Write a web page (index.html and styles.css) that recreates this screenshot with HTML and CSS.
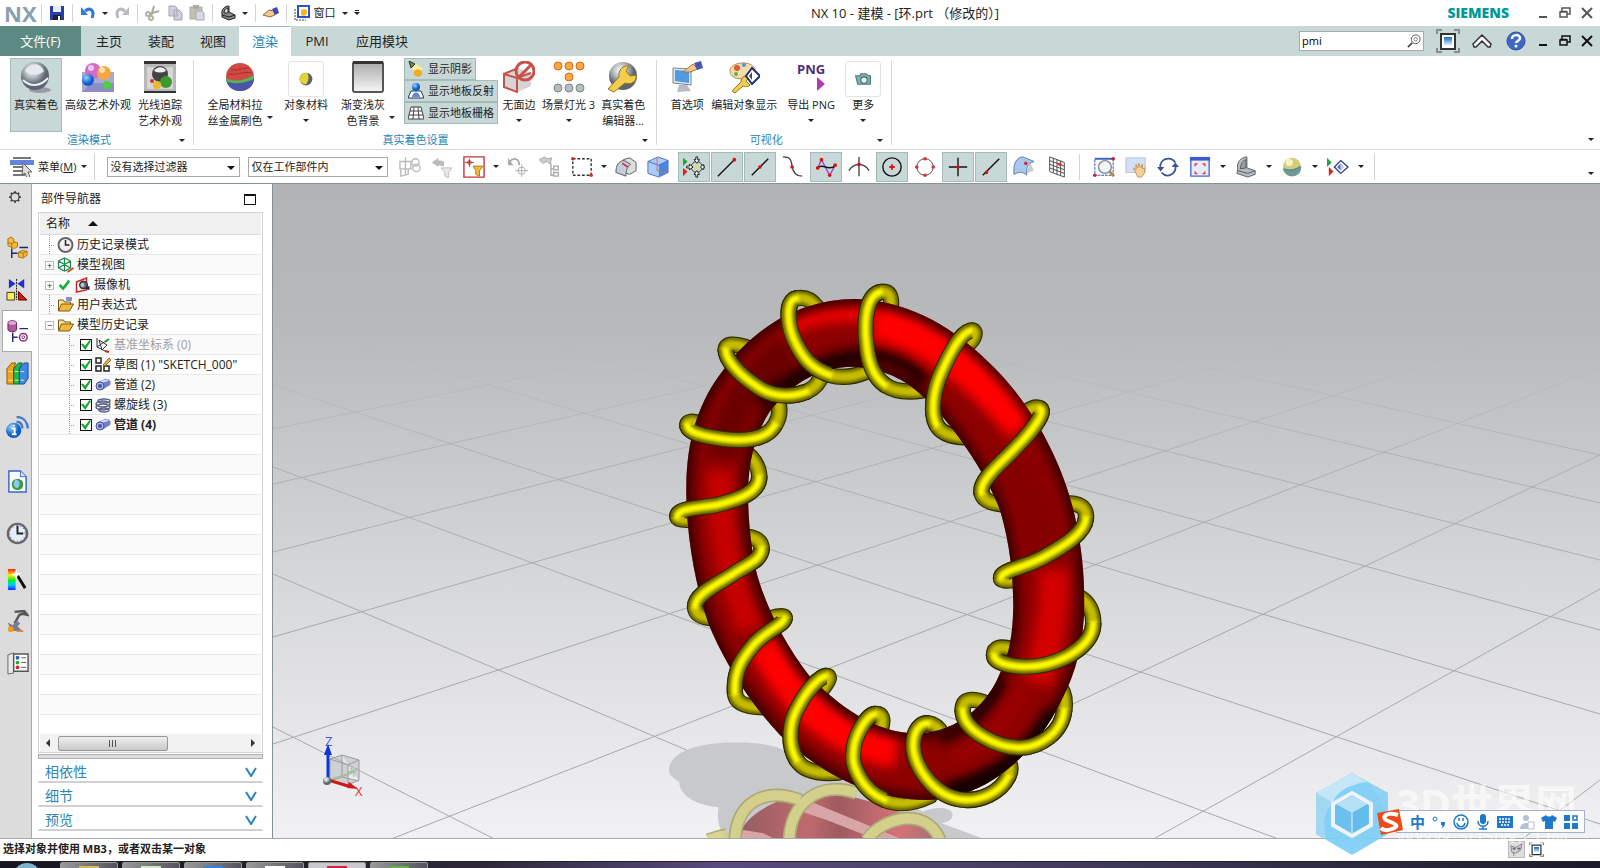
FILE: index.html
```
<!DOCTYPE html>
<html lang="zh-CN">
<head>
    <meta charset="UTF-8">
    <meta name="viewport" content="width=device-width, initial-scale=1.0">
    <title>NX 10 - 建模</title>
    <link rel="stylesheet" href="styles.css">
</head>
<body>
    <!-- shared icons -->
    <svg class="defs" aria-hidden="true">
        <defs>
            <radialGradient id="silver" cx="40%" cy="30%"><stop offset="0" stop-color="#fff"/><stop offset=".5" stop-color="#b9bec4"/><stop offset="1" stop-color="#5c646c"/></radialGradient>
            <radialGradient id="blueBall" cx="35%" cy="30%"><stop offset="0" stop-color="#9cd4ff"/><stop offset="1" stop-color="#0b5fc8"/></radialGradient>
            <linearGradient id="rainbow" x2="0" y2="1"><stop offset="0" stop-color="#f22"/><stop offset=".3" stop-color="#fe0"/><stop offset=".55" stop-color="#0e3"/><stop offset=".75" stop-color="#0cf"/><stop offset="1" stop-color="#22f"/></linearGradient>
            <linearGradient id="grayFade" x2="0" y2="1"><stop offset="0" stop-color="#aaa"/><stop offset="1" stop-color="#f6f6f6"/></linearGradient>
            <linearGradient id="screen" x2="0" y2="1"><stop offset="0" stop-color="#1668c0"/><stop offset="1" stop-color="#d8ecff"/></linearGradient>
        </defs>
        <symbol id="i-folder" viewBox="0 0 16 16"><path d="M1 14V3h5l1 2h6v3" fill="#f7e0a0" stroke="#7a5a10"/><path d="M1 14l3-7h12l-4 7z" fill="#f0b93c" stroke="#7a5a10"/></symbol>
        <symbol id="i-pipe" viewBox="0 0 16 16"><path d="M3 5l7-3c4-1 7 3 5 6l-8 5z" fill="#6f80cf"/><path d="M6 5l7-2" stroke="#d5dcfa" stroke-width="2"/><ellipse cx="5" cy="9" rx="4" ry="4" fill="#a9b6ea" stroke="#44508f"/><circle cx="5" cy="9" r="2" fill="#4a5490"/></symbol>
        <symbol id="i-restore" viewBox="0 0 12 12"><path d="M3 4V1h8v6H8M1 5h7v5H1zM1 4.500h7" fill="none" stroke="currentColor" stroke-width="1.500"/></symbol>
        <symbol id="i-close" viewBox="0 0 12 12"><path d="M1 1l10 10M11 1L1 11" stroke="currentColor" stroke-width="2"/></symbol>
        <symbol id="i-min" viewBox="0 0 12 12"><path d="M2 10h8" stroke="currentColor" stroke-width="2"/></symbol>
        <symbol id="i-fit" viewBox="0 0 24 24"><path d="M1 5V1h5M18 1h5v4M1 19v4h5M18 23h5v-4" fill="none" stroke="#8c8c8c" stroke-width="2"/><path d="M5 5h14v15H5z" fill="#fff" stroke="#333" stroke-width="2"/><path d="M8 8h8v8H8z" fill="url(#screen)"/></symbol>
        <symbol id="i-clamp" viewBox="0 0 24 24"><path d="M3 15C1 7 7 1 13 1v12l9 3v4l-8 3-12-4z" fill="#b8bcc0" stroke="#55595d"/><path d="M6 14c0-5 2-9 6-10v9z" fill="#989ca0" stroke="#55595d"/><path d="M3 16l11 3 8-3" fill="none" stroke="#55595d"/></symbol>
        <symbol id="i-play2" viewBox="0 0 24 24"><path d="M0 2l5 5-5 5z" fill="#1fa83a"/><path d="M2 12l5 5-5 5z" fill="#d22"/><path d="M15 5l8 7-8 7-7-7z" fill="#fff" stroke="#333f90" stroke-width="1.500"/><path d="M15 8v8l-4-4z" fill="#5a74d0"/><path d="M15 8v8l4-4z" fill="#ccd"/></symbol>
    </svg>

    <header class="titlebar">
        <span class="logo">NX</span>
        <i class="sep"></i>
        <button class="quick" aria-label="保存"><svg viewBox="0 0 16 16"><path d="M1 1h14v14H1z" fill="#2a3cab"/><path d="M4 1h8v6H4z" fill="#e6ecff"/><path d="M4 10h8v5H4z" fill="#222"/><path d="M9 11h2v4H9z" fill="#fff"/></svg></button>
        <i class="sep"></i>
        <button class="quick" aria-label="撤消"><svg viewBox="0 0 16 16"><path d="M5 6c5-4 10-1 7 7" fill="none" stroke="#2f78dc" stroke-width="3"/><path d="M1 2v8h7z" fill="#2f78dc"/></svg></button>
        <i class="caret"></i>
        <button class="quick" aria-label="重做"><svg viewBox="0 0 16 16"><path d="M11 6C6 2 1 5 4 13" fill="none" stroke="#b7bcc2" stroke-width="3"/><path d="M15 2v8H8z" fill="#b7bcc2"/></svg></button>
        <i class="sep"></i>
        <button class="quick" aria-label="剪切"><svg viewBox="0 0 16 16"><path d="M9 1L6 11M14 6L4 9" stroke="#a9a9a0" stroke-width="2"/><circle cx="3" cy="9" r="2" fill="none" stroke="#b5b3a0" stroke-width="2"/><circle cx="6" cy="13" r="2" fill="none" stroke="#b5b3a0" stroke-width="2"/></svg></button>
        <button class="quick" aria-label="复制"><svg viewBox="0 0 16 16"><path d="M2 1h6l2 2v8H2zM7 5h5l3 3v7H7z" fill="#cfcfda" stroke="#a4a4b4"/></svg></button>
        <button class="quick" aria-label="粘贴"><svg viewBox="0 0 16 16"><path d="M1 2h12v12H1z" fill="#c3c0b0" stroke="#aaa"/><path d="M4 0h6v4H4z" fill="#aaa"/><path d="M7 6h6l2 2v7H7z" fill="#d8d8e0" stroke="#a4a4b4"/></svg></button>
        <i class="sep"></i>
        <button class="quick" aria-label="重复命令"><svg viewBox="0 0 16 16"><path d="M2 9C1 4 5 1 9 1v6l6 3v3l-6 2-7-3z" fill="#888" stroke="#222"/><path d="M4 8c0-3 2-5 4-5v5z" fill="#ddd" stroke="#222"/><path d="M2 10l7 2 6-2" fill="none" stroke="#222"/></svg></button>
        <i class="caret"></i>
        <i class="sep"></i>
        <button class="quick" aria-label="触控模式"><svg viewBox="0 0 16 16"><path d="M0 10l6-5 5 1 1 4-5 2z" fill="#f4c894" stroke="#9a6a34"/><path d="M9 4l5-2 2 6-4 2z" fill="#3b49b6"/></svg></button>
        <i class="sep"></i>
        <button class="quick window-menu"><svg viewBox="0 0 16 16"><path d="M1 4v11h11" fill="none" stroke="#444" stroke-dasharray="2 1"/><path d="M4 1h11v11H4z" fill="#fff" stroke="#2c50d0" stroke-width="2"/><path d="M7 5l3-1 3 1v4l-3 2-3-1z" fill="#f5b61e"/></svg>窗口</button>
        <i class="caret"></i>
        <i class="caret overflow"></i>
        <h1 class="title">NX 10 - 建模 - [环.prt （修改的）]</h1>
        <span class="brand">SIEMENS</span>
        <div class="window-buttons">
            <button aria-label="最小化"><svg><use href="#i-min"/></svg></button>
            <button aria-label="还原"><svg><use href="#i-restore"/></svg></button>
            <button aria-label="关闭"><svg><use href="#i-close"/></svg></button>
        </div>
    </header>

    <nav class="tabs">
        <button class="file-tab">文件(F)</button>
        <button class="tab">主页</button>
        <button class="tab">装配</button>
        <button class="tab">视图</button>
        <button class="tab active">渲染</button>
        <button class="tab">PMI</button>
        <button class="tab">应用模块</button>
        <div class="search">
            <input type="text" value="pmi" aria-label="查找命令">
            <svg viewBox="0 0 16 16"><circle cx="10" cy="6" r="5" fill="#fff" stroke="#444"/><circle cx="10" cy="6" r="2" fill="none" stroke="#777"/><path d="M6 10l-5 5" stroke="#444" stroke-width="2"/></svg>
        </div>
        <button class="tool" aria-label="全屏"><svg><use href="#i-fit"/></svg></button>
        <button class="tool" aria-label="最小化功能区"><svg viewBox="0 0 24 24"><path d="M3 15l9-9 9 9-1 3h-2l-6-6-6 6H4z" fill="#fff" stroke="#333" stroke-width="1.500"/></svg></button>
        <button class="tool" aria-label="帮助"><svg viewBox="0 0 24 24"><circle cx="12" cy="12" r="9" fill="#3f68c4" stroke="#2f4f9e"/><path d="M8 10c0-5 8-5 8-1 0 3-4 3-4 5" fill="none" stroke="#fff" stroke-width="2.500"/><circle cx="12" cy="17" r="1.500" fill="#fff"/></svg></button>
        <div class="window-buttons dark">
            <button aria-label="最小化部件"><svg><use href="#i-min"/></svg></button>
            <button aria-label="还原部件"><svg><use href="#i-restore"/></svg></button>
            <button aria-label="关闭部件"><svg><use href="#i-close"/></svg></button>
        </div>
    </nav>

    <section class="ribbon">
        <div class="group">
            <div class="group-items">
                <button class="big active"><svg viewBox="0 0 32 32"><ellipse cx="20" cy="29" rx="11" ry="3" fill="#99a"/><circle cx="15" cy="15" r="14" fill="url(#silver)"/><path d="M5 10c5-9 15-9 19 0-5 5-14 5-19 0z" fill="#e6e9ed"/><path d="M3 19c7 7 17 7 25-2" fill="none" stroke="#eef" stroke-width="2"/></svg><span>真实着色</span></button>
                <button class="big wide"><svg viewBox="0 0 32 32"><path d="M0 11h32v20H0z" fill="#a9a9d8"/><path d="M0 31l9-9h23v9z" fill="#8d8dc6"/><circle cx="11" cy="10" r="8" fill="#cf6cc8"/><circle cx="9" cy="7" r="3" fill="#f4c4f0"/><circle cx="22" cy="12" r="7" fill="#f5a742"/><circle cx="20" cy="9" r="3" fill="#ffe0a8"/><circle cx="6" cy="19" r="6" fill="url(#blueBall)"/><circle cx="25" cy="24" r="4" fill="#4cd23a"/></svg><span>高级艺术外观</span></button>
                <button class="big"><svg viewBox="0 0 32 32"><path d="M0 1h32v30H0z" fill="#b8b8b8"/><path d="M0 0h32v3H0zM0 30h32v2H0z" fill="#333"/><path d="M3 6h26v22H3z" fill="#d6d6d6"/><circle cx="16" cy="13" r="8" fill="#444"/><path d="M10 10c3-5 10-5 12 0-4 2-8 2-12 0z" fill="#eee"/><circle cx="22" cy="21" r="6" fill="#3b9a2e"/><circle cx="13" cy="24" r="4" fill="#e8b830"/><circle cx="8" cy="20" r="2" fill="#c33"/></svg><span>光线追踪<br>艺术外观</span></button>
            </div>
            <div class="group-name">渲染模式<i class="caret"></i></div>
        </div>
        <div class="group">
            <div class="group-items">
                <button class="big wider"><svg viewBox="0 0 32 32"><circle cx="16" cy="16" r="14" fill="#cf4a44"/><path d="M2 18c9 5 19 2 28-3 1 8-4 15-14 15-7 0-13-4-14-12z" fill="#4a55a8"/><path d="M2 17c9 5 19 2 28-3v4c-9 4-19 6-28 2z" fill="#57b556"/><path d="M7 8c6 3 12-2 18-1M4 13c8 2 14-3 24-1" fill="none" stroke="#a8302c"/></svg><span class="with-caret"><span>全局材料拉<br>丝金属刷色</span><i class="caret"></i></span></button>
                <button class="big"><svg class="framed" viewBox="0 0 32 32"><circle cx="16" cy="16" r="6" fill="#5d6066"/><path d="M17 10c2 3 2 7-1 11-8 0-8-11 1-11z" fill="#e0d63c"/></svg><span>对象材料</span><i class="caret"></i></button>
                <button class="big wide"><svg viewBox="0 0 32 32"><rect x="1" y="1" width="30" height="30" rx="2" fill="url(#grayFade)" stroke="#555" stroke-width="2"/><path d="M1 0h30v3H1z" fill="#333"/></svg><span class="with-caret"><span>渐变浅灰<br>色背景</span><i class="caret"></i></span></button>
                <div class="stack">
                    <button class="small"><svg viewBox="0 0 16 16"><path d="M1 0l6 3-4 4z" fill="#7a8a30" stroke="#333"/><path d="M4 7l4-4 7 5-6 7z" fill="#f7f0a0"/><path d="M6 10l4-2 4 2v4l-4 2-4-2z" fill="#efac1c"/></svg>显示阴影</button>
                    <button class="small"><svg viewBox="0 0 16 16"><path d="M3 8h10l3 7H0z" fill="#fff" stroke="#335"/><circle cx="8" cy="4" r="4" fill="url(#blueBall)"/><path d="M4 14c0-6 8-6 8 0z" fill="#5a8ad8"/></svg>显示地板反射</button>
                    <button class="small"><svg viewBox="0 0 16 16"><path d="M3 2h10l3 12H0z" fill="#fff"/><path d="M3 2h10l3 12H0zM2 6h12M1 10h14M6 2L5 14M10 2l1 12" fill="none" stroke="#444"/></svg>显示地板栅格</button>
                </div>
                <button class="big narrow"><svg viewBox="0 0 32 32"><path d="M1 13l14-6 13 5v13l-13 6-14-5z" fill="#d5d5d5"/><path d="M1 13l13 4v14L1 26zM1 13l14-6M14 17l14-5" fill="none" stroke="#c8514a" stroke-width="2"/><circle cx="22" cy="10" r="9" fill="none" stroke="#c8514a" stroke-width="3"/><path d="M16 16L28 4" stroke="#c8514a" stroke-width="3"/></svg><span>无面边</span><i class="caret"></i></button>
                <button class="big"><svg viewBox="0 0 32 32"><g fill="#f8a83c" stroke="#d06a20"><circle cx="5" cy="5" r="4"/><circle cx="16" cy="5" r="4"/><circle cx="27" cy="5" r="4"/><circle cx="16" cy="16" r="4"/></g><g fill="#b5bcc0" stroke="#7c8488"><circle cx="5" cy="27" r="4"/><circle cx="16" cy="27" r="4"/><circle cx="27" cy="27" r="4"/></g></svg><span>场景灯光 3</span><i class="caret"></i></button>
                <button class="big"><svg viewBox="0 0 32 32"><circle cx="16" cy="15" r="14" fill="url(#silver)"/><path d="M1 28l11-12c-1-7 4-12 10-11l-3 5 4 5 6-1c1 7-5 10-11 8L7 31z" fill="#f2ce4e" stroke="#9a7418"/></svg><span>真实着色<br>编辑器...</span></button>
            </div>
            <div class="group-name">真实着色设置<i class="caret"></i></div>
        </div>
        <div class="group visual">
            <div class="group-items">
                <button class="big narrow"><svg viewBox="0 0 32 32"><path d="M2 7l18 1v16L2 22z" fill="#dfe4ea" stroke="#7b858f"/><path d="M4 9l14 1v12L4 20z" fill="#4d9be0"/><path d="M8 24h8l4 6-14 1z" fill="#b5bcc4"/><path d="M12 11l10-8 5 5-8 3z" fill="#f3c68c" stroke="#a8763c"/><path d="M23 2l7-2 2 7-6 2z" fill="#4856b8"/></svg><span>首选项</span></button>
                <button class="big wide"><svg viewBox="0 0 32 32"><path d="M2 10C2 0 26-1 27 9c1 6-8 1-10 6s-15 3-15-5z" fill="#f4dcae" stroke="#b08c50"/><circle cx="9" cy="7" r="3" fill="#e05a34"/><circle cx="16" cy="4" r="2" fill="#3f9ad8"/><circle cx="8" cy="13" r="2" fill="#56b848"/><path d="M4 30l9-9c0-6 5-7 8-4l-3 3 4 4c-3 3-7 1-7 1l-8 7z" fill="#f2ce4e" stroke="#9a7418"/><path d="M24 7l8 8-8 8-6-8z" fill="#fff" stroke="#223078" stroke-width="2"/><path d="M24 11v8l-3-4z" fill="#445"/></svg><span>编辑对象显示</span></button>
                <button class="big roomy"><span class="png-icon">PNG<svg viewBox="0 0 8 14"><path d="M0 0l8 7-8 7z" fill="#b03ab0"/></svg></span><span>导出 PNG</span><i class="caret"></i></button>
                <button class="big narrow"><svg class="framed" viewBox="0 0 32 32"><path d="M9 13h4l1-2h5l2 2h2v8H11z" fill="#7fb0ac" stroke="#4a7a78"/><circle cx="17" cy="17" r="3" fill="#dff0f0" stroke="#4a6a6a"/></svg><span>更多</span><i class="caret"></i></button>
            </div>
            <div class="group-name">可视化<i class="caret"></i></div>
        </div>
        <i class="caret ribbon-end"></i>
    </section>

    <section class="toolbar">
        <button class="menu-button"><svg viewBox="0 0 24 20"><path d="M3 1h18M3 10h12M3 14h10M3 18h12" stroke="#777" stroke-width="2"/><path d="M0 3h24v5H0z" fill="#6284dc"/><path d="M13 6l9 9h-4l2 5-3 1-2-5-3 2z" fill="#ddd" stroke="#666"/></svg>菜单(<u>M</u>)<i class="caret"></i></button>
        <i class="sep"></i>
        <div class="picker"><select aria-label="选择过滤器"><option>没有选择过滤器</option></select></div>
        <div class="picker second"><select aria-label="选择范围"><option>仅在工作部件内</option></select></div>
        <div class="icons">
            <button aria-label="装配约束"><svg viewBox="0 0 24 24"><g fill="none" stroke="#bbb" stroke-width="1.500"><path d="M1 6h12v8H1zM7 1v20M2 14v8l8-2v-6"/><circle cx="18" cy="7" r="4"/><circle cx="19" cy="13" r="4"/></g></svg></button>
            <button aria-label="重置过滤器"><svg viewBox="0 0 24 24"><path d="M1 7l7-5v3c7 0 7 1 6 6-2 1-3-1-6-1v2z" fill="#bbb"/><path d="M11 13h12l-4 5v6l-4-2v-4z" fill="#e8e8e8" stroke="#bbb"/></svg></button>
            <button aria-label="选择过滤"><svg viewBox="0 0 24 24"><path d="M1 1h22v22H1z" fill="#fff" stroke="#c8303a" stroke-width="1.500"/><path d="M7 3v9M2 7h10" stroke="#a33"/><circle cx="7" cy="7" r="2" fill="none" stroke="#a33"/><path d="M11 11h11l-4 5v6l-4-2v-4z" fill="#f4b63c" stroke="#a87818"/></svg></button>
            <i class="caret"></i>
            <button aria-label="恢复"><svg viewBox="0 0 24 24"><path d="M3 6c6-6 11-1 10 4" fill="none" stroke="#aaa" stroke-width="2"/><path d="M1 2v8h6z" fill="#aaa"/><path d="M16 9v14M9 16h14" stroke="#aaa"/><circle cx="16" cy="16" r="4" fill="none" stroke="#aaa"/></svg></button>
            <button aria-label="查找组件"><svg viewBox="0 0 24 24"><path d="M0 4l6-3 3 2 5-1-2 7-3-3-5 2z" fill="#ccc" stroke="#aaa"/><path d="M13 8v13h3M13 14h3M16 11h5v4h-5zM16 18h5v4h-5z" fill="none" stroke="#aaa" stroke-width="1.500"/></svg></button>
            <button aria-label="矩形选择"><svg viewBox="0 0 24 24"><path d="M2 3h20v18H2z" fill="none" stroke="#333" stroke-width="1.500" stroke-dasharray="3 2"/><circle cx="2" cy="3" r="2" fill="#c33"/><circle cx="22" cy="21" r="2" fill="#c33"/></svg></button>
            <i class="caret"></i>
            <button aria-label="面规则"><svg viewBox="0 0 24 24"><path d="M9 4l7-2 7 5v9l-7 4-7-2z" fill="#ddd" stroke="#555"/><path d="M1 18c0-8 3-13 9-13l7 4c-4 3-5 7-5 13z" fill="#c2ccdc" stroke="#555"/><path d="M8 8l6 4" stroke="#d33" stroke-width="2"/></svg></button>
            <button aria-label="实体"><svg viewBox="0 0 24 24"><path d="M1 6l11-5 11 4v13l-10 5-12-4z" fill="#a9cdf6" stroke="#56b"/><path d="M13 10v13l10-5V5z" fill="#4a86e0"/><path d="M1 6l12 4 10-5" fill="none" stroke="#56b"/><path d="M11 2v14l11 3" fill="none" stroke="#d66"/></svg></button>
        </div>
        <div class="icons snap">
            <button class="on" aria-label="启用捕捉点"><svg viewBox="0 0 24 24"><path d="M0 2l5 4-5 5z" fill="#1fa83a"/><path d="M0 13l5 4-5 5z" fill="#d22"/><circle cx="15" cy="12" r="6" fill="none" stroke="#333"/><circle cx="15" cy="12" r="2" fill="#f8e020"/><path d="M15 8l-3-4h2V1h2v3h2zM15 16l-3 4h2v3h2v-3h2zM11 12l-4-3v2H4v2h3v2zM19 12l3-3v2h2v2h-2v2z" fill="#fff" stroke="#111"/></svg></button>
            <button class="on" aria-label="终点"><svg viewBox="0 0 24 24"><path d="M2 22L20 4" stroke="#111" stroke-width="1.500"/><circle cx="20" cy="4" r="2" fill="#d11"/></svg></button>
            <button class="on" aria-label="中点"><svg viewBox="0 0 24 24"><path d="M3 21L21 3" stroke="#111" stroke-width="1.500"/><circle cx="12" cy="12" r="2" fill="#d11"/></svg></button>
            <button aria-label="控制点"><svg viewBox="0 0 24 24"><path d="M1 1c8 0 9 3 10 10s4 11 11 11" fill="none" stroke="#444" stroke-width="1.500"/><circle cx="11" cy="12" r="2" fill="#d11"/></svg></button>
            <button class="on" aria-label="极点"><svg viewBox="0 0 24 24"><path d="M3 13L7 4l9 17 6-11" fill="none" stroke="#94c" stroke-width="1.500"/><path d="M3 13c6-6 10 4 19-2" fill="none" stroke="#111" stroke-width="1.500"/><g fill="#d11"><circle cx="3" cy="13" r="2"/><circle cx="7" cy="4" r="2"/><circle cx="16" cy="21" r="2"/><circle cx="22" cy="10" r="2"/></g></svg></button>
            <button aria-label="交点"><svg viewBox="0 0 24 24"><path d="M12 1v21M1 16c5-9 17-9 22 0" fill="none" stroke="#444" stroke-width="1.500"/><circle cx="12" cy="9" r="2" fill="#d11"/></svg></button>
            <button class="on" aria-label="圆心"><svg viewBox="0 0 24 24"><circle cx="12" cy="12" r="10" fill="none" stroke="#111" stroke-width="1.500"/><path d="M12 9v6M9 12h6" stroke="#d11" stroke-width="2"/></svg></button>
            <button aria-label="象限点"><svg viewBox="0 0 24 24"><circle cx="12" cy="12" r="9" fill="none" stroke="#444"/><g fill="#d33"><circle cx="12" cy="3" r="2"/><circle cx="12" cy="21" r="2"/><circle cx="3" cy="12" r="2"/><circle cx="21" cy="12" r="2"/></g></svg></button>
            <button class="on" aria-label="现有点"><svg viewBox="0 0 24 24"><path d="M12 2v20M2 12h20" stroke="#111" stroke-width="1.500"/><circle cx="12" cy="12" r="2" fill="#d11"/></svg></button>
            <button class="on" aria-label="曲线上的点"><svg viewBox="0 0 24 24"><path d="M3 21L21 3" stroke="#111" stroke-width="1.500"/><circle cx="7" cy="18" r="2" fill="#d11"/></svg></button>
            <button aria-label="面上的点"><svg viewBox="0 0 24 24"><path d="M14 19l9-3-4-8z" fill="#ccc"/><path d="M1 20C0 8 4 1 11 1l12 5c-7 2-9 7-8 15-4-4-8-4-14-1z" fill="#a8c8ee" stroke="#5a7ab0"/><circle cx="14" cy="8" r="2" fill="#c33"/></svg></button>
            <button aria-label="栅格点"><svg viewBox="0 0 24 24"><path d="M4 1l16 6v16L4 17zM8 2v16M12 4v16M16 5v16M4 5l16 6M4 9l16 6M4 13l16 6" fill="none" stroke="#444"/><circle cx="15" cy="9" r="2" fill="#d33"/></svg></button>
        </div>
        <i class="sep"></i>
        <div class="icons view">
            <button aria-label="缩放"><svg viewBox="0 0 24 24"><path d="M2 3h20v18H2z" fill="none" stroke="#24c" stroke-dasharray="3 1"/><path d="M2 2h20v2H2z" fill="#3a5cd0"/><circle cx="13" cy="12" r="7" fill="#eef2f6" fill-opacity=".8" stroke="#888" stroke-width="1.500"/><path d="M18 17l5 5" stroke="#a88c50" stroke-width="3"/><circle cx="2" cy="21" r="2" fill="#c22"/><circle cx="22" cy="3" r="2" fill="#c22"/></svg></button>
            <button aria-label="平移"><svg viewBox="0 0 24 24"><path d="M1 2h21v16H1z" fill="#d5def4" stroke="#b5c0e0"/><path d="M9 13l3 2V9l2 4 1-5 2 5 2-4v5l3-1-1 6-3 4h-4z" fill="#f3d09c" stroke="#bf9458"/></svg></button>
            <button aria-label="旋转"><svg viewBox="0 0 24 24"><path d="M4 15C1 3 15-1 20 7M20 9c2 11-9 16-15 9" fill="none" stroke="#3f5298" stroke-width="2"/><path d="M0 12h8l-4 5zM16 12h8l-4-5z" fill="#3f5298"/></svg></button>
            <button aria-label="适合窗口"><svg viewBox="0 0 24 24"><path d="M2 2h20v20H2z" fill="#e8ecff" stroke="#4a6ad8" stroke-width="1.500"/><path d="M1 1h22v4H1z" fill="#3a5cd0"/><path d="M6 8h4L6 12zM18 8h-4l4 4zM6 20h4l-4-4zM18 20h-4l4-4z" fill="#e04a30"/></svg></button>
            <i class="caret"></i>
            <button aria-label="渲染样式"><svg><use href="#i-clamp"/></svg></button>
            <i class="caret"></i>
            <button aria-label="背景"><svg viewBox="0 0 24 24"><circle cx="12" cy="12" r="10" fill="#d4cc78"/><path d="M2 13c6 3 13 2 20-2 1 14-18 15-20 2z" fill="#6f9a94"/><circle cx="9" cy="7" r="4" fill="#f4f2c0"/><path d="M4 14c6 3 12 1 17-3" fill="none" stroke="#3a7ac8"/></svg></button>
            <i class="caret"></i>
            <button aria-label="显示和隐藏"><svg><use href="#i-play2"/></svg></button>
            <i class="caret"></i>
        </div>
        <i class="sep"></i>
        <i class="caret toolbar-end"></i>
    </section>

    <main class="workspace">
        <aside class="resource-bar">
            <button class="gear" aria-label="选项"><svg viewBox="0 0 24 24"><circle cx="12" cy="12" r="7" fill="none" stroke="#333" stroke-width="2"/><path d="M12 2v3M12 19v3M2 12h3M19 12h3M5 5l2 2M17 17l2 2M19 5l-2 2M5 19l2-2" stroke="#333" stroke-width="3"/></svg></button>
            <button aria-label="装配导航器"><svg viewBox="0 0 24 24"><path d="M6 13v10M6 18h6M14 12h9" stroke="#1a2a6a" stroke-width="1.500"/><path d="M2 3l3-2 3 2v3l4 1v4l-3 2-3-1-4-2z" fill="#f4bc38" stroke="#a87412"/><path d="M2 7l4 1 3-2M6 8v4" fill="none" stroke="#a87412"/><path d="M13 17l4-2 5 1v4l-4 3-5-1z" fill="#f4bc38" stroke="#a87412"/><path d="M13 17l5 1 4-2M18 18v4" fill="none" stroke="#a87412"/></svg></button>
            <button aria-label="约束导航器"><svg viewBox="0 0 24 24"><path d="M3 1v10l7-5zM19 1v10l-7-5z" fill="#1c32c8"/><path d="M11 1v22" stroke="#111" stroke-dasharray="2 1"/><path d="M1 15h8v8H1z" fill="#fbf04c" stroke="#333"/><path d="M13 14v9h9z" fill="#d01818" stroke="#600"/></svg></button>
            <button class="current" aria-label="部件导航器"><svg viewBox="0 0 24 24"><path d="M1 3c0-3 9-3 9 0v7c0 3-9 3-9 0z" fill="#b05a9c" stroke="#6a1c5c"/><ellipse cx="5.500" cy="3" rx="4" ry="2" fill="#e0a8d4"/><path d="M13 9h9M6 13v10M6 18h5" stroke="#222a6a" stroke-width="1.500"/><circle cx="17" cy="18" r="4" fill="#fff" stroke="#8a2a7a" stroke-width="1.500"/><circle cx="17" cy="18" r="1.500" fill="none" stroke="#8a2a7a"/></svg></button>
            <button aria-label="重用库"><svg viewBox="0 0 24 24"><path d="M1 7l5-6h4L8 7v16H1z" fill="#f4a018" stroke="#8a5a08"/><path d="M8 7l5-6h4l-3 6v16H8z" fill="#1cb848" stroke="#0a6a28"/><path d="M14 7l5-6h4v16l-4 6h-5z" fill="#3a8ae4" stroke="#174a98"/><path d="M2 10h5M9 10h4M15 10h4M2 19h5M9 19h4M15 19h4" stroke="#ffe890"/></svg></button>
            <button class="tall first" aria-label="HD3D 工具"><svg viewBox="0 0 24 24"><circle cx="8" cy="15" r="8" fill="url(#blueBall)"/><path d="M8 9v2M6 13h3v6M6 19h5" fill="none" stroke="#fff" stroke-width="2"/><path d="M11 6c5 0 6 4 6 7M11 1c9 0 11 6 12 12" fill="none" stroke="#4a7ac8" stroke-width="2.500"/></svg></button>
            <button class="tall" aria-label="Web 浏览器"><svg viewBox="0 0 24 24"><path d="M3 1h12l6 6v16H3z" fill="#fff" stroke="#3465c8" stroke-width="1.500"/><path d="M15 1v6h6" fill="#dce6fa" stroke="#3465c8"/><circle cx="12" cy="15" r="6" fill="#3c9a44"/><path d="M10 10c4 0 6 5 2 9-5-1-5-5-2-9z" fill="#8cc8f0"/></svg></button>
            <button class="medium" aria-label="历史记录"><svg viewBox="0 0 24 24"><circle cx="12" cy="12" r="10" fill="#e6f0fb" stroke="#666" stroke-width="2.500"/><path d="M12 4v8h6" fill="none" stroke="#222" stroke-width="2"/><circle cx="12" cy="12" r="8" fill="none" stroke="#446" stroke-dasharray="1 3"/></svg></button>
            <button aria-label="系统材料"><svg viewBox="0 0 24 24"><path d="M2 1h8v22H2z" fill="url(#rainbow)"/><path d="M12 8l8 13" stroke="#111" stroke-width="3"/><path d="M11 1l1 4 4 1-4 2-1 4-2-4-4-1 4-2z" fill="#fff"/></svg></button>
            <button aria-label="Process Studio"><svg viewBox="0 0 24 24"><path d="M9 2l10-1 3 4-4-1-4 1-5 9" fill="none" stroke="#555" stroke-width="2.500"/><path d="M2 13l5 3 4-5 4 3-3 3 5 5H5z" fill="#7a7a92"/><circle cx="5" cy="20" r="3" fill="#f49a18"/><path d="M11 22h7" stroke="#d98a3c" stroke-width="2"/></svg></button>
            <button aria-label="角色"><svg viewBox="0 0 24 24"><path d="M2 3l6-2v21l-6 1z" fill="#e8e8e8" stroke="#666"/><path d="M8 2h15v18H8z" fill="#fff" stroke="#555" stroke-width="1.500"/><circle cx="12" cy="6" r="2" fill="#26c"/><circle cx="12" cy="11" r="2" fill="#2a3"/><circle cx="12" cy="16" r="2" fill="#d22"/><path d="M16 6h5M16 11h5M16 16h5" stroke="#555"/></svg></button>
        </aside>

        <section class="navigator">
            <h2>部件导航器<i class="maximize"></i></h2>
            <div class="tree-box">
                <div class="tree-head">名称<i class="sort"></i></div>
                <ul class="tree">
                    <li><i class="node"></i><svg viewBox="0 0 16 16"><circle cx="8" cy="8" r="7" fill="#f0f0f0" stroke="#666" stroke-width="2"/><path d="M8 3v5h4" fill="none" stroke="#222" stroke-width="1.500"/></svg>历史记录模式</li>
                    <li><button class="node toggle" aria-label="展开">+</button><svg viewBox="0 0 16 16"><path d="M1 4l6-3 6 3v7l-6 3-6-3zM7 1v13M1 4l12 7M13 4L1 11" fill="none" stroke="#1c8a4c" stroke-width="1.200"/><path d="M10 15l6-4" stroke="#d42" stroke-width="2"/></svg>模型视图</li>
                    <li><button class="node toggle" aria-label="展开">+</button><svg class="tick" viewBox="0 0 16 16"><path d="M3 8l4 4 7-9" fill="none" stroke="#18b038" stroke-width="3"/></svg><svg viewBox="0 0 16 16"><path d="M2 5l10-4v12L2 15z" fill="#fff" stroke="#d22" stroke-width="1.500"/><circle cx="9" cy="8" r="4" fill="#667" stroke="#222"/><circle cx="8" cy="8" r="2" fill="#acd"/><path d="M11 10l4-1v4l-4-1z" fill="#224"/></svg>摄像机</li>
                    <li><i class="node"></i><svg><use href="#i-folder"/><path d="M9 1h6M9 3h6" stroke="#229"/></svg>用户表达式</li>
                    <li><button class="node toggle" aria-label="折叠">−</button><svg><use href="#i-folder"/></svg>模型历史记录</li>
                    <li class="child muted"><i class="node"></i><input type="checkbox" id="f0" checked><svg viewBox="0 0 16 16"><path d="M2 1v9l10 5M2 10l10-7M4 3l8 5-5 5z" fill="none" stroke="#333"/><path d="M10 5l4-3" stroke="#1a2" stroke-width="2"/><path d="M10 14l4 1" stroke="#c22" stroke-width="2"/></svg><label for="f0">基准坐标系 (0)</label></li>
                    <li class="child"><i class="node"></i><input type="checkbox" id="f1" checked><svg viewBox="0 0 16 16"><path d="M1 1h5v5H1zM1 9h5v5H1zM9 9h5v5H9z" fill="#fff" stroke="#222" stroke-width="1.500"/><path d="M8 8l6-7 2 2-6 6z" fill="#f4b820" stroke="#865"/></svg><label for="f1">草图 (1) "SKETCH_000"</label></li>
                    <li class="child"><i class="node"></i><input type="checkbox" id="f2" checked><svg><use href="#i-pipe"/></svg><label for="f2">管道 (2)</label></li>
                    <li class="child"><i class="node"></i><input type="checkbox" id="f3" checked><svg viewBox="0 0 16 16"><g fill="none" stroke="#5a6288" stroke-width="1.500"><ellipse cx="9" cy="4" rx="6" ry="2"/><ellipse cx="8" cy="7" rx="7" ry="3"/><ellipse cx="8" cy="10" rx="7" ry="3"/><ellipse cx="9" cy="13" rx="5" ry="2"/></g></svg><label for="f3">螺旋线 (3)</label></li>
                    <li class="child last"><i class="node"></i><input type="checkbox" id="f4" checked><svg><use href="#i-pipe"/></svg><label for="f4">管道 (4)</label></li>
                </ul>
                <div class="scrollbar"><i class="arrow-left"></i><span class="thumb"></span><i class="arrow-right"></i></div>
            </div>
            <div class="splitter"></div>
            <button class="fold">相依性<svg viewBox="0 0 12 10"><path d="M1 1l5 8 5-8" /></svg></button>
            <button class="fold">细节<svg viewBox="0 0 12 10"><path d="M1 1l5 8 5-8" /></svg></button>
            <button class="fold">预览<svg viewBox="0 0 12 10"><path d="M1 1l5 8 5-8" /></svg></button>
        </section>

        <section class="viewport">
            <svg class="scene" viewBox="273 184 1327 654" preserveAspectRatio="xMidYMid slice">
                <defs>
                    <linearGradient id="gridFade" gradientUnits="userSpaceOnUse" x1="0" y1="340" x2="0" y2="620"><stop offset="0" stop-color="#a4a6a8" stop-opacity="0"/><stop offset=".45" stop-color="#a2a4a6" stop-opacity=".7"/><stop offset="1" stop-color="#a6a8aa"/></linearGradient>
                    <linearGradient id="reflected" x2="1"><stop offset="0" stop-color="#8a4a50"/><stop offset=".35" stop-color="#c05a5e"/><stop offset=".5" stop-color="#98484e"/><stop offset=".8" stop-color="#d86468"/><stop offset="1" stop-color="#986068"/></linearGradient>
                    <filter id="soft" x="-20%" y="-20%" width="140%" height="140%"><feGaussianBlur stdDeviation="16"/></filter>
                    <filter id="softer" x="-20%" y="-20%" width="140%" height="140%"><feGaussianBlur stdDeviation="5"/></filter>
                    <path id="ring" clip-rule="evenodd" fill-rule="evenodd" d="M139 650C140 500 180 390 250 300C350 160 500 85 650 87C820 95 950 180 1060 290C1190 420 1275 600 1305 740C1325 830 1333 910 1333 1000C1333 1110 1310 1210 1260 1300C1180 1460 1030 1590 860 1590C680 1590 530 1500 420 1395C320 1290 245 1160 205 1060C160 930 137 770 139 650ZM325 650C325 560 360 450 410 400C480 320 560 290 640 290C730 295 800 330 850 380C930 450 1040 610 1080 720C1110 820 1120 920 1120 1010C1118 1090 1110 1150 1080 1210C1050 1290 960 1390 830 1390C700 1390 590 1300 510 1220C430 1120 375 1000 350 910C330 820 322 720 325 650Z"/>
                    <clipPath id="ringClip"><use href="#ring" clip-rule="evenodd"/></clipPath>
                    <g id="coilFront">
                        <path d="M470 85C435 90 440 170 470 225C490 265 520 300 570 315"/>
                        <path d="M722 66C680 75 670 150 680 225C685 280 700 320 735 345"/>
                        <path d="M992 182C960 190 930 250 905 305C880 360 870 430 890 465"/>
                        <path d="M1200 415C1222 425 1170 490 1130 530C1090 575 1015 630 1025 670"/>
                        <path d="M1338 745C1335 790 1270 830 1210 862C1150 895 1083 900 1083 925"/>
                        <path d="M1360 1060C1360 1120 1290 1165 1220 1183C1150 1200 1062 1185 1062 1155"/>
                        <path d="M1273 1320C1265 1390 1200 1430 1145 1433C1070 1435 968 1380 968 1320"/>
                        <path d="M1105 1520C1080 1570 1020 1592 975 1590C880 1585 815 1480 820 1420C822 1380 842 1358 865 1360"/>
                        <path d="M735 1590C660 1560 635 1480 640 1450C640 1400 680 1335 705 1332"/>
                        <path d="M470 1470C440 1420 450 1350 475 1310C500 1260 540 1220 558 1218"/>
                        <path d="M285 1270C280 1200 310 1160 345 1120C390 1075 430 1065 434 1045"/>
                        <path d="M165 1010C165 970 240 940 290 905C330 880 365 868 365 835"/>
                        <path d="M358 620C358 670 290 690 230 705C170 715 112 715 112 740"/>
                        <path d="M405 465C380 510 310 515 250 507C200 500 142 490 142 465"/>
                        <path d="M500 365C450 385 390 380 345 345C300 315 257 270 257 240"/>
                    </g>
                    <!-- full loops, including the parts that pass behind the ring -->
                    <g id="coilLoops">
                        <use href="#coilFront"/>
                        <path d="M470 85Q505 78 530 110M570 315Q620 330 680 305M722 66Q760 60 752 115M735 345Q775 372 845 362M992 182C1012 178 1005 205 985 222M890 465Q908 498 970 502"/>
                        <path d="M1200 415Q1185 407 1160 425M1025 670Q1031 698 1085 703M1338 745Q1342 702 1290 700M1083 925Q1083 935 1125 930M1360 1060Q1360 1010 1325 985M1062 1155Q1062 1122 1115 1137"/>
                        <path d="M1273 1320Q1278 1290 1268 1265M968 1320Q968 1272 1040 1300M1105 1520Q1118 1495 1105 1475M865 1360Q890 1362 910 1395M735 1590Q795 1614 870 1578M705 1332Q738 1330 722 1380"/>
                        <path d="M470 1470Q498 1516 595 1508M558 1218Q580 1216 545 1260M285 1270Q288 1312 370 1312M434 1045Q436 1032 390 1045M165 1010Q165 1042 220 1045M365 835Q365 805 320 800"/>
                        <path d="M358 620Q358 590 332 560M112 740Q112 750 150 750M405 465Q425 435 415 395M142 465Q142 448 180 460M500 365Q535 350 545 315M257 240Q257 212 320 232"/>
                    </g>
                </defs>

                <g class="grid" stroke="url(#gridFade)">
                    <path d="M273 727L1600 1398M273 574L1600 1139M273 467L1600 958M273 385L1600 824M273 321L1600 714M273 269L1600 630M273 227L1600 560M273 191L1600 503M273 160L1600 455"/>
                    <path d="M273 1788L1600 780M273 1332L1600 589M273 1082L1600 455M273 885L1600 368M273 744L1600 308M273 637L1600 257M273 552L1600 215M273 484L1600 182M273 429L1600 156"/>
                </g>

                <g transform="translate(640 270) scale(.3333)">
                    <path class="shadow" d="M87 1500C90 1440 190 1415 300 1418C400 1418 450 1440 480 1480L850 1625C880 1608 940 1610 938 1635C936 1650 925 1655 905 1660L1040 1710H260C235 1680 230 1640 236 1612C160 1605 115 1570 118 1535C100 1525 87 1515 87 1500Z"/>
                    <g class="reflection">
                        <path fill="url(#reflected)" d="M290 1705C330 1610 440 1575 560 1565C700 1590 850 1640 900 1705Z"/>
                        <path class="reflected-shine" d="M500 1590L620 1640L780 1705H700L560 1650L470 1620ZM310 1680L370 1690L400 1705H300Z"/>
                        <g class="reflected-rim"><path d="M285 1710C290 1600 370 1550 480 1590"/><path d="M448 1710C450 1600 540 1530 650 1570"/><path d="M680 1710C730 1640 860 1610 900 1710"/><path d="M205 1710Q230 1700 260 1695"/></g>
                        <g class="reflected-coil"><path d="M285 1710C290 1600 370 1550 480 1590"/><path d="M448 1710C450 1600 540 1530 650 1570"/><path d="M680 1710C730 1640 860 1610 900 1710"/><path d="M205 1710Q230 1700 260 1695"/></g>
                    </g>

                    <use href="#coilLoops" class="coil coil-rim"/>
                    <use href="#coilLoops" class="coil coil-dark"/>
                    <use href="#coilLoops" class="coil coil-mid" filter="url(#softer)"/>
                    <use href="#ring" class="ring"/>
                    <g clip-path="url(#ringClip)" fill="none">
                        <g filter="url(#soft)">
                            <path d="M240 600C235 750 260 900 330 1080" stroke="#c60000" stroke-width="80"/>
                            <path d="M245 560C270 420 340 310 450 240" stroke="#6a0000" stroke-width="90"/>
                            <path d="M440 170Q570 115 690 135" stroke="#e80000" stroke-width="55"/>
                            <path d="M360 400Q480 290 640 260T850 340" stroke="#200000" stroke-width="50"/>
                            <path d="M700 155C850 180 1000 290 1150 470" stroke="#f00" stroke-width="110"/>
                            <path d="M1080 560Q1190 700 1220 880" stroke="#850000" stroke-width="110"/>
                            <path d="M1240 900Q1250 1050 1190 1240" stroke="#d40000" stroke-width="90"/>
                            <path d="M1150 1250Q1080 1400 930 1460" stroke="#980000" stroke-width="60"/>
                            <path d="M1250 1330Q1150 1520 920 1570" stroke="#180000" stroke-width="70"/>
                            <path d="M1090 1230Q1000 1400 900 1410" stroke="#300000" stroke-width="40"/>
                            <path d="M370 1120C450 1280 580 1420 770 1445" stroke="#f00" stroke-width="100"/>
                        </g>
                        <use href="#ring" stroke="#140000" stroke-width="26" fill="none" filter="url(#soft)"/>
                    </g>
                    <use href="#coilFront" class="coil coil-rim over"/>
                    <use href="#coilFront" class="coil coil-dark over"/>
                    <use href="#coilFront" class="coil coil-mid" filter="url(#softer)"/>
                    <use href="#coilFront" class="coil coil-shine" filter="url(#softer)"/>
                </g>

                <g class="triad">
                    <path d="M330 759l12-4 17 5v20l-11 5-18-4zM330 759l18 6v20M348 765l11-5M342 755v22l17 4M342 777l-12 4" fill="#b4b6b8" fill-opacity=".5" stroke="#9a9c9e"/>
                    <path d="M329 780l20-6" stroke="#9cc0a0" stroke-width="2"/><path d="M356 770l-8 1 2 4z" fill="#9cc0a0"/>
                    <path d="M328 780V752" stroke="#0a36d8" stroke-width="3"/><path d="M328 744l4 11h-8z" fill="#0a36d8"/>
                    <path d="M328 780l20 6" stroke="#d01818" stroke-width="3"/><path d="M358 789l-11-1 2-6z" fill="#d01818"/>
                    <circle cx="327" cy="781" r="4" fill="url(#silver)"/>
                    <text x="325" y="746" fill="#3a5af0">Z</text><text x="355" y="796" fill="#d33">X</text><text x="350" y="777" fill="#9cc0a0">Y</text>
                </g>
            </svg>
        </section>
    </main>

    <footer class="status">
        <span>选择对象并使用 MB3，或者双击某一对象</span>
        <div class="status-tools">
            <button aria-label="完成" class="flag"><svg viewBox="0 0 16 16"><path d="M2 4l5 2 7-4-2 7-5 3-4-1zM5 11v4" fill="#ccc" stroke="#888"/><path d="M4 6h3v2H4zM9 6h3v2H9z" fill="#666"/></svg></button>
            <button aria-label="全屏显示"><svg><use href="#i-fit"/></svg></button>
        </div>
    </footer>
    <div class="taskbar">
        <span class="start"></span>
        <span class="task"><i class="t-folder"></i></span>
        <span class="task"><i class="t-sheet"></i></span>
        <span class="task"><i class="t-bird"></i></span>
        <span class="task"><i class="t-white"></i></span>
        <span class="task bright"><i class="t-red"></i></span>
        <span class="task"><i class="t-green"></i></span>
    </div>

    <div class="watermark">
        <svg viewBox="0 0 72 82">
            <path d="M36 0l36 20v41L36 82 0 61V20z" fill="#79cdf6" fill-opacity=".9"/>
            <path d="M36 0l15 9C30 12 20 20 17 30L0 20z" fill="#c4e6f6"/><path d="M0 20l17 10C8 38 6 50 10 66L0 61z" fill="#a2d8f2"/><path d="M51 9l21 11v28C68 30 62 24 51 9z" fill="#8fd2f4"/>
            <path d="M36 20l19 11v21L36 63 17 52V31z" fill="#6cc0ee" stroke="#eef3f6" stroke-width="4"/><path d="M20 31l16-8 16 8-16 9z" fill="#b5e0f5"/><path d="M36 40v20l16-9V31z" fill="#63bcec"/><path d="M36 40v20" stroke="#eef3f6" stroke-width="1"/>
        </svg>
        <div class="watermark-text"><b>3D世界网</b><span>WWW.3DSJW.COM</span></div>
    </div>

    <div class="ime">
        <svg class="ime-logo" viewBox="0 0 28 28"><path d="M1 5l22-4 4 21-22 5z" fill="#f04a18"/><path d="M22 7C10 3 4 10 12 13s12 5 4 8-10 0-11-1" fill="none" stroke="#fff" stroke-width="4"/></svg>
        <b>中</b>
        <svg viewBox="0 0 16 16"><circle cx="4" cy="5" r="2" fill="none" stroke="#1f78c8"/><path d="M10 8h4c0 4-1 5-4 6 1-1 2-2 1-3h-1z" fill="#1f78c8"/></svg>
        <svg viewBox="0 0 16 16"><circle cx="8" cy="8" r="7" fill="none" stroke="#1f78c8" stroke-width="1.500"/><path d="M4 9c1 5 7 5 8 0M6 4v3M10 4v3" fill="none" stroke="#1f78c8" stroke-width="1.500"/></svg>
        <svg viewBox="0 0 16 16"><rect x="5" y="0" width="6" height="10" rx="3" fill="#1f78c8"/><path d="M3 7c0 7 10 7 10 0M8 12v3M4 15h8" fill="none" stroke="#1f78c8" stroke-width="1.500"/></svg>
        <svg viewBox="0 0 16 16"><path d="M0 2h16v12H0z" fill="#1f78c8"/><path d="M2 5h12M2 8h12M4 11h8" stroke="#fff" stroke-width="1.500" stroke-dasharray="2 1"/></svg>
        <svg viewBox="0 0 16 16"><circle cx="7" cy="4" r="3" fill="#b4c2d8"/><path d="M1 15c0-8 12-8 12 0z" fill="#b4c2d8"/><path d="M9 8h6v7H9z" fill="#fff" stroke="#b4c2d8"/></svg>
        <svg viewBox="0 0 16 16"><path d="M5 1c1 2 5 2 6 0l5 3-2 4-2-1v8H4V7L2 8 0 4z" fill="#1f78c8"/></svg>
        <svg viewBox="0 0 16 16"><path d="M1 1h6v6H1zM1 9h6v6H1zM9 9h6v6H9z" fill="#1f78c8"/><path d="M10 2h4v4h-4z" fill="none" stroke="#1f78c8" stroke-width="1.500"/></svg>
    </div>
</body>
</html>
```
FILE: styles.css
```
* {
    box-sizing: border-box;
}
body {
    margin: 0;
    height: 100vh;
    display: flex;
    flex-direction: column;
    position: relative;
    overflow: hidden;
    background: #fff;
    color: #222;
    font-family: "Open Sans", "Noto Sans CJK SC", sans-serif;
    font-size: 11px;
    line-height: 16px;
}
button {
    font: inherit;
    color: inherit;
    background: none;
    border: 1px solid transparent;
    padding: 0;
}
svg {
    display: block;
    flex: none;
}
.defs {
    position: absolute;
    width: 0;
    height: 0;
}
.caret {
    flex: none;
    width: 0;
    height: 0;
    border: 3px solid transparent;
    border-top-color: #222;
    border-bottom: 0;
}
.sep {
    flex: none;
    width: 1px;
    background: #d4d4d4;
}

/* title bar */
.titlebar {
    display: flex;
    align-items: center;
    height: 26px;
    padding-left: 4px;
}
.titlebar .sep {
    height: 18px;
    margin: 0 4px;
}
.titlebar .caret {
    margin: 0 3px;
}
.titlebar .overflow {
    box-shadow: 0 -3px 0 -1px #222;
}
.logo {
    font-size: 22px;
    font-weight: bold;
    color: #8a9fb0;
}
.quick {
    display: flex;
    align-items: center;
    gap: 4px;
    padding: 0 2px;
}
.quick svg {
    width: 16px;
    height: 16px;
}
.title {
    flex: 1;
    margin: 0;
    text-align: center;
    font-size: 13px;
    font-weight: normal;
}
.brand {
    font-size: 14px;
    font-weight: 800;
    color: #009999;
}
.window-buttons {
    display: flex;
    gap: 10px;
    margin: 0 7px 0 28px;
    color: #555;
}
.window-buttons.dark {
    color: #111;
}
.window-buttons svg {
    width: 12px;
    height: 12px;
}
.window-buttons button {
    border: 0;
}

/* ribbon tabs */
.tabs {
    display: flex;
    align-items: center;
    height: 30px;
    background: #c8d8d6;
    font-size: 13px;
}
.file-tab {
    width: 81px;
    height: 30px;
    margin-right: 2px;
    background: #5c8982;
    color: #fff;
}
.tab {
    min-width: 52px;
    height: 30px;
    padding: 0 12px;
}
.tab.active {
    background: #fff;
    color: #1f84bc;
    border-top-color: #9bb;
}
.search {
    display: flex;
    align-items: center;
    width: 125px;
    height: 20px;
    margin-left: auto;
    margin-right: 11px;
    padding-right: 2px;
    background: #fff;
    border: 1px solid #a9a9a9;
}
.search input {
    flex: 1;
    min-width: 0;
    border: 0;
    padding: 0 2px;
    font: inherit;
    font-size: 11px;
    outline: 0;
}
.search svg {
    width: 14px;
    height: 14px;
}
.tool {
    margin-right: 8px;
}
.tool svg {
    width: 24px;
    height: 24px;
}
.tabs .window-buttons {
    margin-left: 0;
    margin-right: 7px;
}

/* ribbon */
.ribbon {
    display: flex;
    height: 94px;
    padding-top: 2px;
    border-bottom: 1px solid #d8d8d8;
}
.group {
    display: flex;
    flex-direction: column;
    position: relative;
    padding: 0 8px 0 6px;
}
.group:first-child {
    padding-left: 10px;
}
.group.visual {
    padding-left: 9px;
}
.group::after {
    content: "";
    position: absolute;
    right: 0;
    top: 2px;
    bottom: 4px;
    width: 1px;
    background: #d8d8d8;
}
.group-items {
    display: flex;
    height: 74px;
}
.group-name {
    display: flex;
    align-items: center;
    color: #2b86b8;
    justify-content: center;
    position: relative;
    padding-right: 18px;
}
.group-name .caret {
    position: absolute;
    right: 1px;
}
.big {
    display: flex;
    flex-direction: column;
    align-items: center;
    min-width: 52px;
    padding: 2px 1px 0;
    white-space: nowrap;
}
.big > svg {
    width: 32px;
    height: 32px;
    margin-bottom: 4px;
}
.big > .framed {
    width: 36px;
    height: 36px;
    margin-bottom: 0;
    border: 1px solid #e4e4e4;
    border-radius: 3px;
}
.big > .caret {
    margin-top: 6px;
}
.big.narrow {
    min-width: 42px;
}
.big.roomy {
    min-width: 62px;
}
.big.wide {
    min-width: 72px;
}
.big.wider {
    min-width: 80px;
}
.with-caret {
    display: flex;
    align-items: flex-end;
    gap: 4px;
}
.with-caret .caret {
    margin-bottom: 10px;
}
.big.active,
.small,
.on {
    background: #c8d8d6;
    border-color: #a4bcb8;
}
.stack {
    display: flex;
    flex-direction: column;
    align-items: flex-start;
}
.small {
    display: flex;
    align-items: center;
    gap: 4px;
    height: 22px;
    padding: 0 3px;
}
.small svg {
    width: 16px;
    height: 16px;
}
.png-icon {
    display: flex;
    flex-direction: column;
    height: 36px;
    color: #4c2f7d;
    font-size: 13px;
    font-weight: bold;
}
.png-icon svg {
    width: 8px;
    height: 14px;
    align-self: flex-end;
}
.ribbon-end,
.toolbar-end {
    align-self: flex-end;
    margin: 0 6px 8px auto;
}

/* selection toolbar */
.toolbar {
    display: flex;
    align-items: center;
    height: 34px;
    padding-left: 9px;
    border-bottom: 1px solid #84948f;
}
.toolbar > .sep {
    height: 26px;
}
.menu-button {
    display: flex;
    align-items: center;
    margin-right: 6px;
}
.menu-button svg {
    width: 24px;
    height: 20px;
    margin-right: 4px;
}
.menu-button .caret {
    margin-left: 5px;
}
.picker {
    position: relative;
    width: 133px;
    margin-left: 12px;
}
.picker.second {
    width: 140px;
    margin-left: 8px;
}
.picker::after {
    content: "";
    position: absolute;
    right: 5px;
    top: 9px;
    border: 4px solid transparent;
    border-top-color: #111;
    border-bottom: 0;
    pointer-events: none;
}
.picker select {
    appearance: none;
    display: block;
    width: 100%;
    height: 20px;
    padding: 0 2px;
    background: #fff;
    border: 1px solid #a9a9a9;
    border-radius: 0;
    font: inherit;
    color: inherit;
}
.icons {
    display: flex;
    align-items: center;
    margin-left: 6px;
}
.icons button {
    display: flex;
    align-items: center;
    justify-content: center;
    width: 32px;
    height: 30px;
}
.icons svg {
    width: 22px;
    height: 22px;
}
.icons .caret {
    margin: 0 3px;
}
.icons.snap {
    gap: 1px;
    margin-left: 4px;
    margin-right: 6px;
}
.icons.view {
    margin-left: 8px;
    margin-right: 6px;
}
.icons.view .caret {
    margin: 0 4px;
}

/* workspace */
.workspace {
    flex: 1;
    display: flex;
    min-height: 0;
}
.resource-bar {
    display: flex;
    flex-direction: column;
    width: 32px;
    flex: none;
    background: #dcdcdc;
    border-right: 1px solid #a9a9a9;
}
.resource-bar button {
    display: flex;
    align-items: center;
    justify-content: flex-end;
    height: 42px;
    width: 32px;
    padding-right: 2px;
}
.resource-bar svg {
    width: 23px;
    height: 23px;
}
.resource-bar .gear {
    height: 26px;
    margin-bottom: 16px;
    padding-right: 9px;
}
.resource-bar .gear svg {
    width: 14px;
    height: 14px;
}
.resource-bar .current {
    background: #fff;
    border-color: #a9a9a9;
    border-right: 0;
    margin-left: 2px;
    width: 30px;
}
.resource-bar .tall {
    height: 54px;
}
.resource-bar .first {
    margin-top: 6px;
}
.resource-bar .medium {
    height: 50px;
}
.navigator {
    display: flex;
    flex-direction: column;
    flex: none;
    width: 241px;
    padding: 0 9px 7px 6px;
    border-right: 1px solid #84909a;
    background: #fff;
    font-size: 12px;
}
.navigator h2 {
    display: flex;
    align-items: center;
    justify-content: space-between;
    height: 28px;
    margin: 0;
    padding: 2px 7px 0 3px;
    font-size: 12px;
    font-weight: normal;
}
.maximize {
    width: 12px;
    height: 11px;
    border: 1px solid #111;
    border-top-width: 2px;
}
.tree-box {
    flex: 1;
    display: flex;
    flex-direction: column;
    border: 1px solid #d4d4d4;
    padding: 0 1px;
    min-height: 0;
}
.tree-head {
    display: flex;
    align-items: center;
    gap: 18px;
    height: 22px;
    padding-left: 6px;
    background: #f0f0f0;
    border-bottom: 1px solid #dcdcdc;
}
.sort {
    border: 5px solid transparent;
    border-top: 0;
    border-bottom-color: #111;
}
.tree {
    flex: 1;
    margin: 0;
    padding: 0;
    list-style: none;
    background: repeating-linear-gradient(#fff 0 19px, #e8e8e8 19px 20px, #fafafa 20px 39px, #e8e8e8 39px 40px);
}
.tree li {
    display: flex;
    align-items: center;
    gap: 3px;
    height: 20px;
    padding-left: 5px;
    white-space: nowrap;
}
.tree svg {
    width: 17px;
    height: 16px;
}
.tree .tick {
    width: 14px;
}
.node {
    flex: none;
    width: 9px;
    height: 20px;
    background: repeating-linear-gradient(#999 0 1px, transparent 1px 2px) 4px 0 / 1px 20px no-repeat, repeating-linear-gradient(90deg, #999 0 1px, transparent 1px 2px) 4px 10px / 5px 1px no-repeat;
}
.toggle {
    height: 9px;
    border: 1px solid #bbb;
    background: #fff;
    font-size: 9px;
    line-height: 7px;
}
.tree .child {
    padding-left: 25px;
}
.tree .child svg {
    width: 16px;
}
.child .node {
    width: 12px;
}
.child input {
    appearance: none;
    width: 12px;
    height: 12px;
    margin: 0;
    border: 1px solid #111;
    background: #fff;
}
.child input:checked::after {
    content: "";
    display: block;
    width: 10px;
    height: 10px;
    background: #14a82c;
    clip-path: polygon(0 45%, 20% 35%, 40% 60%, 85% 0, 100% 10%, 42% 100%);
}
.muted {
    color: #a0a0a0;
}
.last {
    font-weight: bold;
}
.scrollbar {
    display: flex;
    align-items: center;
    height: 18px;
    padding: 1px 6px;
    background: #f2f2f2;
}
.scrollbar .thumb {
    width: 110px;
    height: 15px;
    margin: 0 auto 0 8px;
    border: 1px solid #979797;
    border-radius: 2px;
    background: repeating-linear-gradient(90deg, #555 0 1px, transparent 1px 3px) center / 8px 7px no-repeat, linear-gradient(#f0f0f0, #c8c8c8);
}
.arrow-left,
.arrow-right {
    border: 4px solid transparent;
    border-right-color: #333;
    border-left: 0;
}
.arrow-right {
    border-left: 4px solid #333;
    border-right: 0;
}
.splitter {
    height: 5px;
    margin-top: 1px;
    background: #dcdcdc;
    border: 1px solid #b0b0b0;
}
.fold {
    display: flex;
    align-items: center;
    justify-content: space-between;
    height: 24px;
    padding: 3px 5px 0 6px;
    border-bottom: 2px solid #d0d0d0;
    color: #2b86b8;
    font-size: 14px;
}
.fold svg {
    width: 12px;
    height: 10px;
    fill: none;
    stroke: #2b86b8;
    stroke-width: 2;
}

/* graphics window */
.viewport {
    flex: 1;
    min-width: 0;
    background: linear-gradient(#b2b3b5, #b8b9bb 22%, #d7d8da 62%, #f1f1f3);
}
.scene {
    width: 100%;
    height: 100%;
}
.grid {
    fill: none;
    stroke-width: 1;
}
.ring {
    fill: #8c0000;
}
.coil {
    fill: none;
    stroke-linecap: round;
}
.coil-rim {
    stroke: #2b2a00;
    stroke-width: 49;
}
.coil-dark {
    stroke: #6e6800;
    stroke-width: 42;
}
.coil-mid {
    stroke: #c4bc00;
    stroke-width: 26;
}
.coil-shine {
    stroke: #ffff00;
    stroke-width: 15;
}
.over {
    stroke-linecap: butt;
}
.shadow {
    fill: #c8c9cb;
}
.reflection {
    opacity: .85;
}
.reflected-shine {
    fill: #dca0a2;
}
.reflected-rim,
.reflected-coil {
    fill: none;
    stroke: #a8a468;
    stroke-width: 40;
}
.reflected-coil {
    stroke: #d6d282;
    stroke-width: 30;
}
.triad {
    fill: none;
    font-size: 13px;
}

/* status line and taskbar */
.status {
    display: flex;
    align-items: center;
    justify-content: space-between;
    height: 23px;
    padding: 0 55px 2px 3px;
    border-top: 1px solid #a9a9a9;
    font-weight: bold;
}
.status-tools {
    display: flex;
    gap: 3px;
}
.status-tools svg {
    width: 15px;
    height: 15px;
}
.status-tools .flag {
    background: #ddd;
    border-color: #bbb;
}
.taskbar {
    display: flex;
    gap: 4px;
    height: 7px;
    overflow: hidden;
    background: linear-gradient(90deg, #17151f, #2c2838 30%, #5a4a80 45%, #4a4268 60%, #1c1a28);
    border-top: 1px solid #222;
}
.start {
    width: 56px;
}
.start::after {
    content: "";
    display: block;
    width: 28px;
    height: 28px;
    margin: 1px 0 0 13px;
    border-radius: 50%;
    background: #7fb2cc;
}
.task {
    width: 58px;
    height: 10px;
    border: 1px solid #999;
    border-radius: 2px;
    background: linear-gradient(90deg, #999, #55525e);
}
.task.bright {
    background: #c8c8ce;
}
.task i {
    display: block;
    width: 20px;
    height: 8px;
    margin: 3px auto 0;
    background: #fff;
}
.task .t-folder {
    background: #d8b860;
}
.task .t-sheet {
    background: #cfe8c4;
}
.task .t-bird {
    background: #2f86d8;
}
.task .t-red {
    background: #d0243c;
}
.task .t-green {
    background: #5cb83c;
}

/* overlays in the lower right corner */
.watermark {
    position: absolute;
    right: 23px;
    bottom: 13px;
    display: flex;
    align-items: center;
    gap: 8px;
    pointer-events: none;
}
.watermark svg {
    width: 72px;
    height: 82px;
}
.watermark-text {
    display: flex;
    flex-direction: column;
    color: #fff;
    opacity: .6;
}
.watermark b {
    font-size: 42px;
    line-height: 44px;
}
.watermark span {
    font-size: 20px;
    line-height: 20px;
}
.ime {
    position: absolute;
    right: 15px;
    bottom: 35px;
    display: flex;
    align-items: center;
    gap: 6px;
    height: 23px;
    padding: 0 5px 0 0;
    background: #fff;
    border: 1px solid #a8b0c8;
    color: #1f78c8;
    font-size: 15px;
}
.ime svg {
    width: 16px;
    height: 16px;
}
.ime .ime-logo {
    width: 28px;
    height: 28px;
    margin-left: -21px;
}
```
